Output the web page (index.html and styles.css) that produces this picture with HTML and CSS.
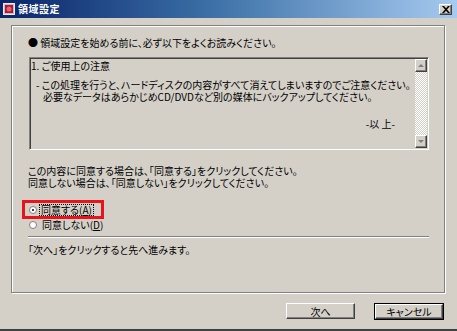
FILE: index.html
```html
<!DOCTYPE html>
<html lang="ja">
<head>
<meta charset="utf-8">
<title>領域設定</title>
<link rel="stylesheet" href="styles.css">
</head>
<body>
<div class="window">
  <div class="titlebar">
    <span class="app-icon"><svg width="12" height="12" viewBox="0 0 12 12"><rect x="0.5" y="0.5" width="11" height="11" fill="#c0c0c0" stroke="#e8e8e8"/><rect x="2" y="2" width="8" height="8" fill="#b01830"/><circle cx="6" cy="6" r="2.5" fill="#f06070"/></svg></span>
    <span class="title">領域設定</span>
    <span class="close"><svg width="8" height="7" viewBox="0 0 8 7"><path d="M0 0h2l2 2.2L6 0h2L5 3.5 8 7H6L4 4.8 2 7H0l3-3.5z" fill="#000"/></svg></span>
  </div>
  <div class="frame">
    <p class="lead">● 領域設定を始める前に、必ず以下をよくお読みください。</p>
    <div class="textbox">
      <div class="tb-text">
        <div class="tb-head">1. ご使用上の注意</div>
        <div class="tb-note">
          <div>- この処理を行うと、ハードディスクの内容がすべて消えてしまいますのでご注意ください。</div>
          <div class="indent">必要なデータはあらかじめCD/DVDなど別の媒体にバックアップしてください。</div>
        </div>
        <div class="tb-end">-以 上-</div>
      </div>
      <div class="scrollbar">
        <span class="sb-btn"><span class="tri up"></span></span>
        <span class="sb-track"></span>
        <span class="sb-btn"><span class="tri down"></span></span>
      </div>
    </div>
    <p class="ask">この内容に同意する場合は、「同意する」をクリックしてください。<br>同意しない場合は、「同意しない」をクリックしてください。</p>
    <div class="choices">
      <div class="radio-row highlight"><span class="radio checked"></span><span class="label focus">同意する(<u>A</u>)</span></div>
      <div class="radio-row plain"><span class="radio"></span><span class="label">同意しない(<u>D</u>)</span></div>
    </div>
    <div class="sep"></div>
    <p class="hint">「次へ」をクリックすると先へ進みます。</p>
  </div>
  <div class="buttons">
    <span class="btn">次へ</span>
    <span class="btn default"><span class="btn-inner">キャンセル</span></span>
  </div>
</div>
</body>
</html>
```
FILE: styles.css
```css
html, body {
  margin: 0;
  padding: 0;
  background: #d4d0c8;
}
.window {
  width: 457px;
  height: 331px;
  box-sizing: border-box;
  background: #d4d0c8;
  border-bottom: 2px solid #404040;
  font-family: "Noto Sans CJK JP", "Noto Sans", sans-serif;
  font-size: 10px;
  font-feature-settings: "palt";
  color: #000;
  display: flex;
  flex-direction: column;
  overflow: hidden;
}
.titlebar {
  height: 18px;
  flex: none;
  display: flex;
  align-items: center;
  padding-left: 3px;
  background: linear-gradient(to right, #0a246a 0%, #3a6ea5 45%, #a6caf0 100%);
  color: #fff;
}
.app-icon {
  width: 12px;
  height: 12px;
  display: flex;
}
.title {
  margin-left: 3px;
  font-size: 10px;
  font-weight: bold;
  line-height: 12px;
  letter-spacing: 0.5px;
}
.close {
  margin-left: auto;
  margin-right: 5px;
  width: 13px;
  height: 11px;
  box-sizing: border-box;
  background: #d4d0c8;
  border: 1px solid;
  border-color: #fff #404040 #404040 #fff;
  box-shadow: inset -1px -1px #808080;
  display: flex;
  align-items: center;
  justify-content: center;
}
.frame {
  margin: 7px 0 0 11px;
  width: 434px;
  height: 268px;
  box-sizing: border-box;
  border: 1px solid #808080;
  box-shadow: inset 1px 1px #fff, 1px 1px #fff;
  padding: 11px 0 0 16px;
  display: flex;
  flex-direction: column;
}
.lead {
  margin: 0;
  line-height: 12px;
}
.textbox {
  margin: 8px 0 0 1px;
  width: 400px;
  height: 93px;
  box-sizing: border-box;
  border: 1px solid;
  border-color: #808080 #fff #fff #808080;
  box-shadow: inset 1px 1px #404040, inset -1px -1px #d4d0c8;
  padding: 1px;
  display: flex;
}
.tb-text {
  flex: 1;
  line-height: 11px;
  padding-top: 1px;
}
.tb-note {
  margin-top: 8px;
  padding-left: 5px;
  line-height: 12px;
}
.tb-note .indent {
  padding-left: 7px;
}
.tb-end {
  margin-top: 15px;
  text-align: right;
  padding-right: 20px;
}
.scrollbar {
  width: 12px;
  display: flex;
  flex-direction: column;
}
.sb-btn {
  height: 13px;
  box-sizing: border-box;
  background: #d4d0c8;
  border: 1px solid;
  border-color: #fff #404040 #404040 #fff;
  box-shadow: inset -1px -1px #808080;
  display: flex;
  align-items: center;
  justify-content: center;
}
.tri {
  width: 0;
  height: 0;
  border-left: 3px solid transparent;
  border-right: 3px solid transparent;
}
.tri.up { border-bottom: 3px solid #808080; }
.tri.down { border-top: 3px solid #808080; }
.sb-track {
  flex: 1;
  background-color: #ecebe7;
  background-image: conic-gradient(#fff 25%, #d4d0c8 0 50%, #fff 0 75%, #d4d0c8 0);
  background-size: 2px 2px;
}
.ask {
  margin: 15px 0 0;
  line-height: 12px;
}
.choices {
  margin-top: 11px;
  display: flex;
  flex-direction: column;
  align-items: flex-start;
}
.radio-row {
  display: flex;
  align-items: center;
  line-height: 11px;
}
.radio-row.highlight {
  margin-left: -6px;
  border: 3px solid #e8141c;
  padding: 0 7px 0 4px;
  height: 13px;
}
.radio-row.plain {
  padding-left: 1px;
  height: 11px;
}
.radio {
  width: 8px;
  height: 8px;
  box-sizing: border-box;
  border-radius: 50%;
  background: #fff;
  border: 1px solid #808080;
  display: flex;
  align-items: center;
  justify-content: center;
  margin-right: 4px;
}
.radio.checked::after {
  content: "";
  width: 2px;
  height: 2px;
  border-radius: 50%;
  background: #000;
}
.label u {
  text-decoration: underline;
  text-underline-offset: 1px;
}
.label.focus {
  border: 1px dotted #000;
  padding: 0 1px;
  margin-left: -2px;
  line-height: 10px;
}
.plain .label {
  margin-left: 1px;
}
.sep {
  margin-top: 6px;
  width: 401px;
  height: 1px;
  background: #808080;
  border-bottom: 1px solid #fff;
}
.hint {
  margin: 6px 0 0;
  line-height: 11px;
}
.buttons {
  margin-top: 10px;
  display: flex;
  justify-content: flex-end;
  gap: 19px;
  padding-right: 13px;
}
.btn {
  width: 69px;
  height: 16px;
  box-sizing: border-box;
  background: #d4d0c8;
  border: 1px solid;
  border-color: #fff #404040 #404040 #fff;
  box-shadow: inset -1px -1px #808080;
  display: flex;
  align-items: center;
  justify-content: center;
  line-height: 11px;
}
.btn.default {
  width: 70px;
  height: 17px;
  border: 1px solid #000;
  box-shadow: none;
  padding: 0;
}
.btn-inner {
  width: 100%;
  height: 100%;
  box-sizing: border-box;
  border: 1px solid;
  border-color: #fff #404040 #404040 #fff;
  box-shadow: inset -1px -1px #808080;
  display: flex;
  align-items: center;
  justify-content: center;
}
```
